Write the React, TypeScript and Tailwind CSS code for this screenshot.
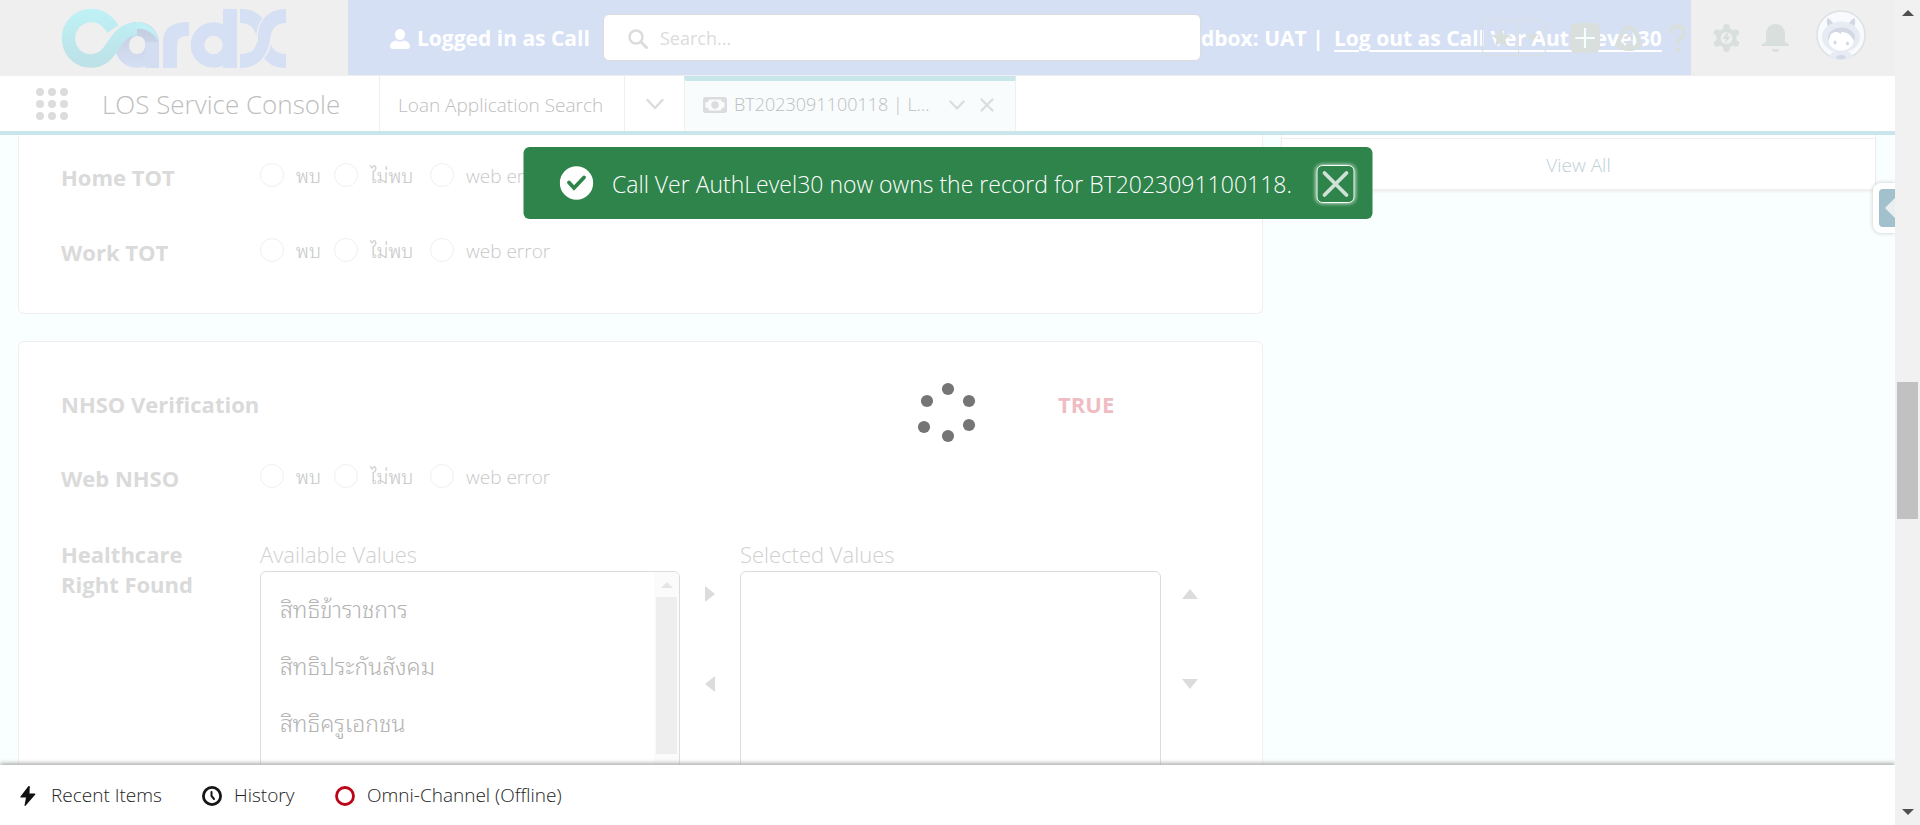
import React from "react";

const PAGE_FONT = "font-['Open_Sans','Noto_Sans','Noto_Sans_Thai_Looped','Noto_Looped_Thai','Loma','Waree','Tlwg_Typo',sans-serif]";

function CardXLogo() {
  return (
    <svg width="226" height="60" viewBox="61 8 226 60" fill="none" role="img" aria-label="CardX">
      <defs>
        <linearGradient id="teal" x1="0" y1="8" x2="0" y2="68" gradientUnits="userSpaceOnUse">
          <stop offset="0" stopColor="#bef2f6" />
          <stop offset="1" stopColor="#bde0e6" />
        </linearGradient>
        <linearGradient id="navy" x1="0" y1="30" x2="0" y2="68" gradientUnits="userSpaceOnUse">
          <stop offset="0" stopColor="#c5cde1" />
          <stop offset="1" stopColor="#d6e0f5" />
        </linearGradient>
      </defs>
      <path d="M137 29C128 29 122 37 122 45.500C122 54 128 61 137 61C146 61 152 54 152 46V44C152 36 147 29 137 29Z" stroke="url(#navy)" strokeWidth="14" />
      <path d="M145 42H159V68H145Z" fill="#d3ddf2" />
      <path
        d="M113 29C107 20 101 15.500 91.500 15.500C78 15.500 68.500 26 68.500 38.300C68.500 51 78 61 91.500 61C103 61 108 53 113 46C119 36 125 29 137 29"
        stroke="url(#teal)"
        strokeWidth="13.500"
      />
      <path d="M136 22C149 22 157 30 159 42C153 32 145 28 135 29Z" fill="#bef0f5" />
      <path d="M163 68V42C163 29 171 22 189 22V36C181 36 177 38 177 46V68Z" fill="#d6e0f5" />
      <circle cx="213.500" cy="45" r="16" stroke="#d6e0f5" strokeWidth="13.500" />
      <path d="M223 9H237V68H223Z" fill="#d6e0f5" />
      <path d="M240 9C254 9 260 15 263 19C259 23 257 29 256.500 36C254 27 249 23 240 23Z" fill="#d6e0f5" />
      <path d="M240 68V54C250 54 254 49 257 42L268 48C263 61 255 68 240 68Z" fill="#d6e0f5" />
      <path d="M286 9C268 9 258 20 257 36C256.500 44 254 49 250 52" stroke="#efefef" strokeWidth="1.500" />
      <path d="M286 9V23C275 23 271 30 270 40C269 50 262 60 254 65C262 52 257 45 258 34C260 18 270 9 286 9Z" fill="#d6e0f5" />
      <path d="M271 44C273 50 277 54 286 54V68C275 68 268 64 264 58C268 54 270 50 271 44Z" fill="#d6e0f5" />
    </svg>
  );
}

function Avatar() {
  return (
    <svg width="50" height="50" viewBox="0 0 50 50" className="block">
      <circle cx="25" cy="25" r="24" fill="#f8fafd" stroke="#dce2e2" strokeWidth="1.500" />
      <path d="M11 9.500C11 8 12.500 8 13.500 9L18 14L13 18C11 16 10.500 12 11 9.500Z" fill="#d2d8e4" />
      <path d="M39 9.500C39 8 37.500 8 36.500 9L32 14L37 18C39 16 39.500 12 39 9.500Z" fill="#d2d8e4" />
      <ellipse cx="25" cy="27" rx="19" ry="15.500" fill="#e7ebf4" />
      <path d="M13 48C14 43 18 40 25 40S36 43 37 48C30 50 20 50 13 48Z" fill="#e7ebf4" />
      <ellipse cx="25.500" cy="28" rx="13.500" ry="10.500" fill="#d2d8e4" />
      <path d="M14 27C14 24 17 21.500 21 22L26 24L25 22C30 22 34 24 36 28C38 29 38.500 32 37 34C34 38.500 30 40.500 25 40.500S16 38.500 14 35C12 32 12.500 29 14 27Z" fill="#fff" />
      <ellipse cx="19" cy="32.500" rx="1.500" ry="2" fill="#d2d8e4" />
      <ellipse cx="31.500" cy="33.500" rx="1.500" ry="2" fill="#d2d8e4" />
      <path d="M20 48.500C20 46 22 45 25 45S30 46 30 48.500C27 49 23 49 20 48.500Z" fill="#d2d8e4" />
    </svg>
  );
}

function HeaderActions() {
  return (
    <div className="absolute inset-y-0 right-[29px] flex items-center text-[#d8dfdc]">
      <div className="mr-6 flex h-9 overflow-hidden rounded-md border border-[#d8dfdc]">
        <button type="button" aria-label="Favorites" className="flex w-9 items-center justify-center border-r border-[#d8dfdc]">
          <svg width="22" height="22" viewBox="0 0 24 24" fill="currentColor">
            <path d="M12 1l3 7.500h8l-6.300 5 2.300 8.500-7-5-7 5 2.300-8.500L1 8.500h8z" />
          </svg>
        </button>
        <button type="button" aria-label="Favorites list" className="flex w-[26px] items-center justify-center">
          <svg width="12" height="8" viewBox="0 0 12 8" fill="currentColor">
            <path d="M0 0h12L6 8z" />
          </svg>
        </button>
      </div>
      <button type="button" aria-label="Global actions" className="mr-3.5 flex size-[30px] items-center justify-center rounded-md bg-[#d8dfdc]">
        <svg width="20" height="20" viewBox="0 0 20 20" stroke="#f4ffff" strokeWidth="2.200" strokeLinecap="round">
          <path d="M10 1v18M1 10h18" />
        </svg>
      </button>
      <button type="button" aria-label="Guidance center" className="mr-6">
        <svg width="30" height="28" viewBox="0 0 30 28" fill="none">
          <path d="M4 19C7 13 9 4 15 3.500S23 13 26 19" stroke="currentColor" strokeWidth="4" />
          <path d="M1 20C5 16 8 17 11 22L15 16L20 22C23 17 26 17 29 20C27 25 22 27 15 27S3 25 1 20Z" fill="currentColor" />
          <path d="M12 15C14 10 18 11 18 15" stroke="currentColor" strokeWidth="2" />
        </svg>
      </button>
      <button type="button" aria-label="Help" className="mr-[26px]">
        <svg width="19" height="28" viewBox="0 0 19 28" fill="none" stroke="currentColor" strokeWidth="4" strokeLinecap="round">
          <path d="M2.500 8C3 4 6 2.200 9.500 2.200C14 2.200 16.500 5 16.500 8.500C16.500 13 10 13.500 9.800 19" />
          <path d="M9.800 25.500v.1" strokeWidth="4.500" />
        </svg>
      </button>
      <button type="button" aria-label="Setup" className="mr-[21px]">
        <svg width="27" height="28" viewBox="0 0 27 28">
          <g fill="currentColor">
            <circle cx="13.500" cy="14" r="10" />
            <rect x="10.300" y="0" width="6.400" height="28" rx="3" />
            <rect x="10.300" y="0" width="6.400" height="28" rx="3" transform="rotate(60 13.500 14)" />
            <rect x="10.300" y="0" width="6.400" height="28" rx="3" transform="rotate(120 13.500 14)" />
          </g>
          <circle cx="13.500" cy="14" r="6" fill="#efefef" />
          <path d="M14 8.500L9.500 15H13L12 19.500L17.500 12.500H14L16 8.500Z" fill="currentColor" />
        </svg>
      </button>
      <button type="button" aria-label="Notifications" className="mr-[26px]">
        <svg width="29" height="28" viewBox="0 0 29 28" fill="currentColor">
          <path d="M5 18V10C5 4 9 0 14.500 0S24 4 24 10V18C26 19 28.500 20 28.500 22H.5C.5 20 3 19 5 18ZM11 25H18C18 27 16.500 28 14.500 28S11 27 11 25Z" />
        </svg>
      </button>
      <button type="button" aria-label="View profile" className="-mt-[5px]">
        <Avatar />
      </button>
    </div>
  );
}

function GlobalHeader() {
  return (
    <header className="relative flex h-[76px] shrink-0 items-stretch border-b border-[#efefef] bg-[#efefef]">
      <div className="flex w-[348px] shrink-0 items-center pl-[61px]">
        <CardXLogo />
      </div>
      <div className="flex min-w-0 flex-1 items-center overflow-hidden bg-[#d6e0f5] text-[21px] font-bold whitespace-nowrap text-white">
        <div className="flex w-[255px] shrink-0 items-center gap-[7px] overflow-hidden pt-[3px] pl-[42px]">
          <svg width="20" height="20" viewBox="0 0 20 20" fill="currentColor" className="shrink-0">
            <ellipse cx="10" cy="5.500" rx="5" ry="5.500" />
            <path d="M6 11.500C8 13 12 13 14 11.500C17 12 20 14 20 17C20 19 19 20 17.500 20H2.500C1 20 0 19 0 17C0 14 3 12 6 11.500Z" />
          </svg>
          <span>Logged in as Call</span>
        </div>
        <label className="flex h-[47px] min-w-0 flex-1 items-center gap-3 rounded-md border border-[#dcdcdc] bg-white px-6 pt-[3px] text-[#dcdcdc]">
          <svg width="20" height="20" viewBox="0 0 20 20" fill="none" stroke="currentColor" className="shrink-0">
            <circle cx="8" cy="8" r="6.500" strokeWidth="2.500" />
            <path d="M13 13l5.500 5.500" strokeWidth="3" strokeLinecap="round" />
          </svg>
          <input
            type="search"
            aria-label="Search"
            placeholder="Search..."
            className="w-full bg-transparent pb-px text-[18px] font-normal outline-none placeholder:text-[#dcdcdc]"
          />
        </label>
        <div className="flex w-[490px] shrink-0 items-center pt-[3px]">
          <span className="w-[133px] shrink-0">dbox: UAT |</span>
          <a href="#logout" className="underline decoration-2 underline-offset-4">
            Log out as Call Ver AuthLevel30
          </a>
        </div>
      </div>
      <div className="w-[204px] shrink-0" />
      <HeaderActions />
    </header>
  );
}

function Chevron({ size }: { size: number }) {
  return (
    <svg width={size} height={size} viewBox="0 0 18 18" fill="none" stroke="#dcdcdc" strokeWidth="2.500" strokeLinecap="round" strokeLinejoin="round">
      <path d="M1.500 5L9 13L16.500 5" />
    </svg>
  );
}

function NavBar() {
  return (
    <nav className="flex h-[59px] shrink-0 items-stretch border-b-4 border-[#c9e7eb] bg-white text-[19px] font-[350] whitespace-nowrap text-[#bebebe]">
      <button type="button" aria-label="App Launcher" className="ml-9 grid grid-cols-3 content-center gap-1">
        {Array.from({ length: 9 }, (_, i) => (
          <span key={i} className="size-2 rounded-full bg-[#dcdcdc]" />
        ))}
      </button>
      <div className="flex w-[311px] items-center pt-0.5 pl-[34px] text-[26px]">LOS Service Console</div>
      <a href="#search" className="flex w-[245px] items-center border-l border-[#efefef] pt-[3px] pl-[18px]">
        Loan Application Search
      </a>
      <button type="button" aria-label="Show tab menu" className="flex w-[60px] items-center justify-center border-l border-[#efefef]">
        <Chevron size={18} />
      </button>
      <div className="flex w-[332px] items-center border-x border-t-[5px] border-x-[#efefef] border-t-[#c9e7eb] bg-[#f8fcfd] pb-[3px] pl-[18px]">
        <svg width="24" height="16" viewBox="0 0 24 16" fill="none" className="mr-[7px] shrink-0">
          <rect width="24" height="16" rx="2.500" fill="#dcdcdc" />
          <path d="M6 2.500H18C18 4.500 19.500 5.500 21.500 5.500V10.500C19.500 10.500 18 11.500 18 13.500H6C6 11.500 4.500 10.500 2.500 10.500V5.500C4.500 5.500 6 4.500 6 2.500Z" fill="#f8fcfd" />
          <circle cx="12" cy="8" r="3.700" fill="#dcdcdc" />
        </svg>
        <a href="#record" className="w-[215px] text-[18px]">BT2023091100118 | L...</a>
        <button type="button" aria-label="Tab actions">
          <Chevron size={16} />
        </button>
        <button type="button" aria-label="Close tab" className="ml-[15px]">
          <svg width="14" height="14" viewBox="0 0 14 14" stroke="#dcdcdc" strokeWidth="2.200" strokeLinecap="round">
            <path d="M1.500 1.500l11 11M12.500 1.500l-11 11" />
          </svg>
        </button>
      </div>
    </nav>
  );
}

function RadioRow({ label, name }: { label: string; name: string }) {
  return (
    <fieldset className="flex h-[75px] items-start" aria-label={label}>
      <div className="w-[199px] shrink-0 text-[22px] leading-7 font-bold">{label}</div>
      <div className="flex text-[19px] leading-6">
        {[
          { text: "พบ", width: "w-[74px]" },
          { text: "ไม่พบ", width: "w-[96px]" },
          { text: "web error", width: "w-[130px]" },
        ].map((o) => (
          <label key={o.text} className={"flex h-6 items-center gap-3 whitespace-nowrap " + o.width}>
            <input type="radio" name={name} className="size-6 shrink-0 appearance-none rounded-full border border-[#efefef] bg-white" />
            <span className="pt-0.5 font-light text-[#c8c8c8]">{o.text}</span>
          </label>
        ))}
      </div>
    </fieldset>
  );
}

function ArrowButton({ label, path }: { label: string; path: string }) {
  return (
    <button type="button" aria-label={label} className="flex size-6 items-center justify-center">
      <svg width="16" height="16" viewBox="0 0 16 16" fill="#dcdcdc">
        <path d={path} />
      </svg>
    </button>
  );
}

function DualList() {
  return (
    <div className="flex items-start">
      <div className="w-[199px] shrink-0 text-[22px] leading-[30px] font-bold whitespace-nowrap">
        Healthcare
        <br />
        Right Found
      </div>
      <div className="w-[420px]">
        <div id="available" className="mb-0.5 text-[22px] leading-[30px] font-[350] text-[#d0d0d0]">Available Values</div>
        <div className="flex h-[260px] overflow-hidden rounded-md border border-[#dcdcdc]">
          <ul role="listbox" aria-labelledby="available" className="flex-1 pt-[9px] pl-[19px] text-[23px] font-light text-[#b4b4b4]">
            {["สิทธิข้าราชการ", "สิทธิประกันสังคม", "สิทธิครูเอกชน"].map((v) => (
              <li key={v} role="option" aria-selected={false} className="flex h-[57px] items-center">
                {v}
              </li>
            ))}
          </ul>
          <div className="flex w-[25px] flex-col items-center bg-[#fbfbfb]">
            <svg width="12" height="25" viewBox="0 0 12 25" fill="#e6e6e6">
              <path d="M0 16L6 10L12 16Z" />
            </svg>
            <div className="h-[157px] w-[21px] bg-[#eee]" />
          </div>
        </div>
      </div>
      <div className="ml-[18px] flex flex-col gap-[66px] pt-[43px]">
        <ArrowButton label="Add" path="M3 0L13 8L3 16Z" />
        <ArrowButton label="Remove" path="M13 0L3 8L13 16Z" />
      </div>
      <div className="ml-[18px] w-[421px]">
        <div id="selected" className="mb-0.5 text-[22px] leading-[30px] font-[350] text-[#d0d0d0]">Selected Values</div>
        <ul role="listbox" aria-labelledby="selected" className="h-[260px] rounded-md border border-[#dcdcdc]" />
      </div>
      <div className="ml-[17px] flex flex-col gap-[66px] pt-[43px]">
        <ArrowButton label="Move up" path="M0 13L8 3L16 13Z" />
        <ArrowButton label="Move down" path="M0 3L8 13L16 3Z" />
      </div>
    </div>
  );
}

function Toast() {
  return (
    <div role="status" className="absolute top-[147px] left-1/2 flex h-[72px] w-[849px] -translate-x-1/2 items-center rounded-md bg-[#2e844a] pl-9 text-[23px] whitespace-nowrap text-white">
      <svg width="34" height="34" viewBox="0 0 34 34" className="mr-[19px] shrink-0">
        <circle cx="17" cy="17" r="16.700" fill="#fff" />
        <path d="M9.500 16.500L14.500 22L24.500 11.500" fill="none" stroke="#2e844a" strokeWidth="3.800" strokeLinecap="round" />
      </svg>
      <span className="flex-1 pt-0.5 font-[350]">Call Ver AuthLevel30 now owns the record for BT2023091100118.</span>
      <button type="button" aria-label="Close" className="mt-px mr-[18px] flex size-[38px] items-center justify-center rounded-md border border-white shadow-[0_0_4px_#ffffff]">
        <svg width="28" height="28" viewBox="0 0 28 28" stroke="#cfe2d5" strokeWidth="3.800" strokeLinecap="round">
          <path d="M3 3l22 22M25 3L3 25" />
        </svg>
      </button>
    </div>
  );
}

function Spinner() {
  const dots = [
    [31, 8],
    [10, 20],
    [52, 20],
    [7, 46],
    [52, 44],
    [31, 55],
  ];
  return (
    <svg role="img" aria-label="Loading" width="62" height="64" viewBox="0 0 62 64" className="absolute top-[381px] left-1/2 -translate-x-1/2">
      {dots.map(([x, y]) => (
        <circle key={x + "-" + y} cx={x} cy={y} r="6.100" fill="#757575" />
      ))}
    </svg>
  );
}

function UtilityBar() {
  return (
    <footer className="relative flex h-[60px] shrink-0 items-center bg-white pt-px text-[19px] font-[350] text-[#222] shadow-[0_-2px_4px_#b0b0b0]">
      <button type="button" className="flex items-center pl-5">
        <svg width="16" height="20" viewBox="0 0 16 20" fill="#111" className="mr-[15px]">
          <path d="M8.500 0L0.500 10.500C0.300 11 0.500 11.500 1 11.500H6L4.500 19.500C4.500 20 5 20 5.500 19.700L15.300 8.500C15.500 8 15.300 7.500 14.800 7.500H9.500L9.800 .5C9.800 0 9 -.3 8.500 0Z" />
        </svg>
        <span className="w-[151px] text-left">Recent Items</span>
      </button>
      <button type="button" className="flex items-center">
        <svg width="20" height="20" viewBox="0 0 20 20" fill="none" stroke="#161616" className="mr-3">
          <circle cx="10" cy="10" r="8.600" strokeWidth="2.800" />
          <path d="M9.500 6V10L12 13" strokeWidth="2" strokeLinecap="round" />
        </svg>
        <span className="w-[101px] text-left">History</span>
      </button>
      <button type="button" className="flex items-center">
        <svg width="20" height="20" viewBox="0 0 20 20" fill="none" className="mr-3">
          <circle cx="10" cy="10" r="8.500" stroke="#ba0517" strokeWidth="2.800" />
        </svg>
        <span>Omni-Channel (Offline)</span>
      </button>
    </footer>
  );
}

export default function App() {
  return (
    <div className={"flex h-screen overflow-hidden bg-white " + PAGE_FONT}>
      <div className="relative flex min-w-0 flex-1 flex-col overflow-hidden">
        <GlobalHeader />
        <NavBar />
        <main className="relative grid min-h-0 flex-1 grid-cols-[1245fr_595fr] items-start gap-[18px] overflow-hidden bg-[#f9ffff] pr-[19px] pl-[18px] text-[#dadada]">
          <div>
            <section className="rounded-b-md border border-t-0 border-[#efefef] bg-white pt-7 pl-[42px]">
              <RadioRow label="Home TOT" name="home" />
              <RadioRow label="Work TOT" name="work" />
            </section>
            <section className="mt-[27px] h-[600px] rounded-md border border-[#efefef] bg-white pt-[47px] pl-[42px]">
              <div className="flex h-[75px] items-start text-[22px] leading-[30px] font-bold">
                <div className="w-[997px]">NHSO Verification</div>
                <div className="text-[#f0bcc4]">TRUE</div>
              </div>
              <RadioRow label="Web NHSO" name="nhso" />
              <DualList />
            </section>
          </div>
          <aside className="border-x border-b border-[#efefef] bg-white pt-[3px] shadow-[0_2px_3px_#efefef]">
            <a href="#all" className="flex h-[51px] items-center justify-center border-t border-[#efefef] pt-0.5 text-[19px] font-[350] text-[#bdd0d6]">
              View All
            </a>
          </aside>
          <button
            type="button"
            aria-label="Open panel"
            className="absolute top-12 right-0 h-[50px] w-[22px] rounded-l-lg bg-white py-1.5 pl-1.5 shadow-[0_0_4px_#c4c8c8]"
          >
            <span className="flex h-full items-center justify-end rounded-l-sm bg-[#a2c1cd]">
              <svg width="10" height="20" viewBox="0 0 10 20" fill="#ecefef">
                <path d="M10 0V20L0 10Z" />
              </svg>
            </span>
          </button>
        </main>
        <UtilityBar />
        <Toast />
        <Spinner />
      </div>
      <div className="flex w-[25px] shrink-0 flex-col items-center justify-between bg-[#f1f1f1]">
        <svg width="12" height="26" viewBox="0 0 12 26" fill="#505050">
          <path d="M0 16L6 10L12 16Z" />
        </svg>
        <div className="mt-[75px] h-[137px] w-[21px] bg-[#c1c1c1]" />
        <svg width="12" height="26" viewBox="0 0 12 26" fill="#505050">
          <path d="M0 10L6 16L12 10Z" />
        </svg>
      </div>
    </div>
  );
}
